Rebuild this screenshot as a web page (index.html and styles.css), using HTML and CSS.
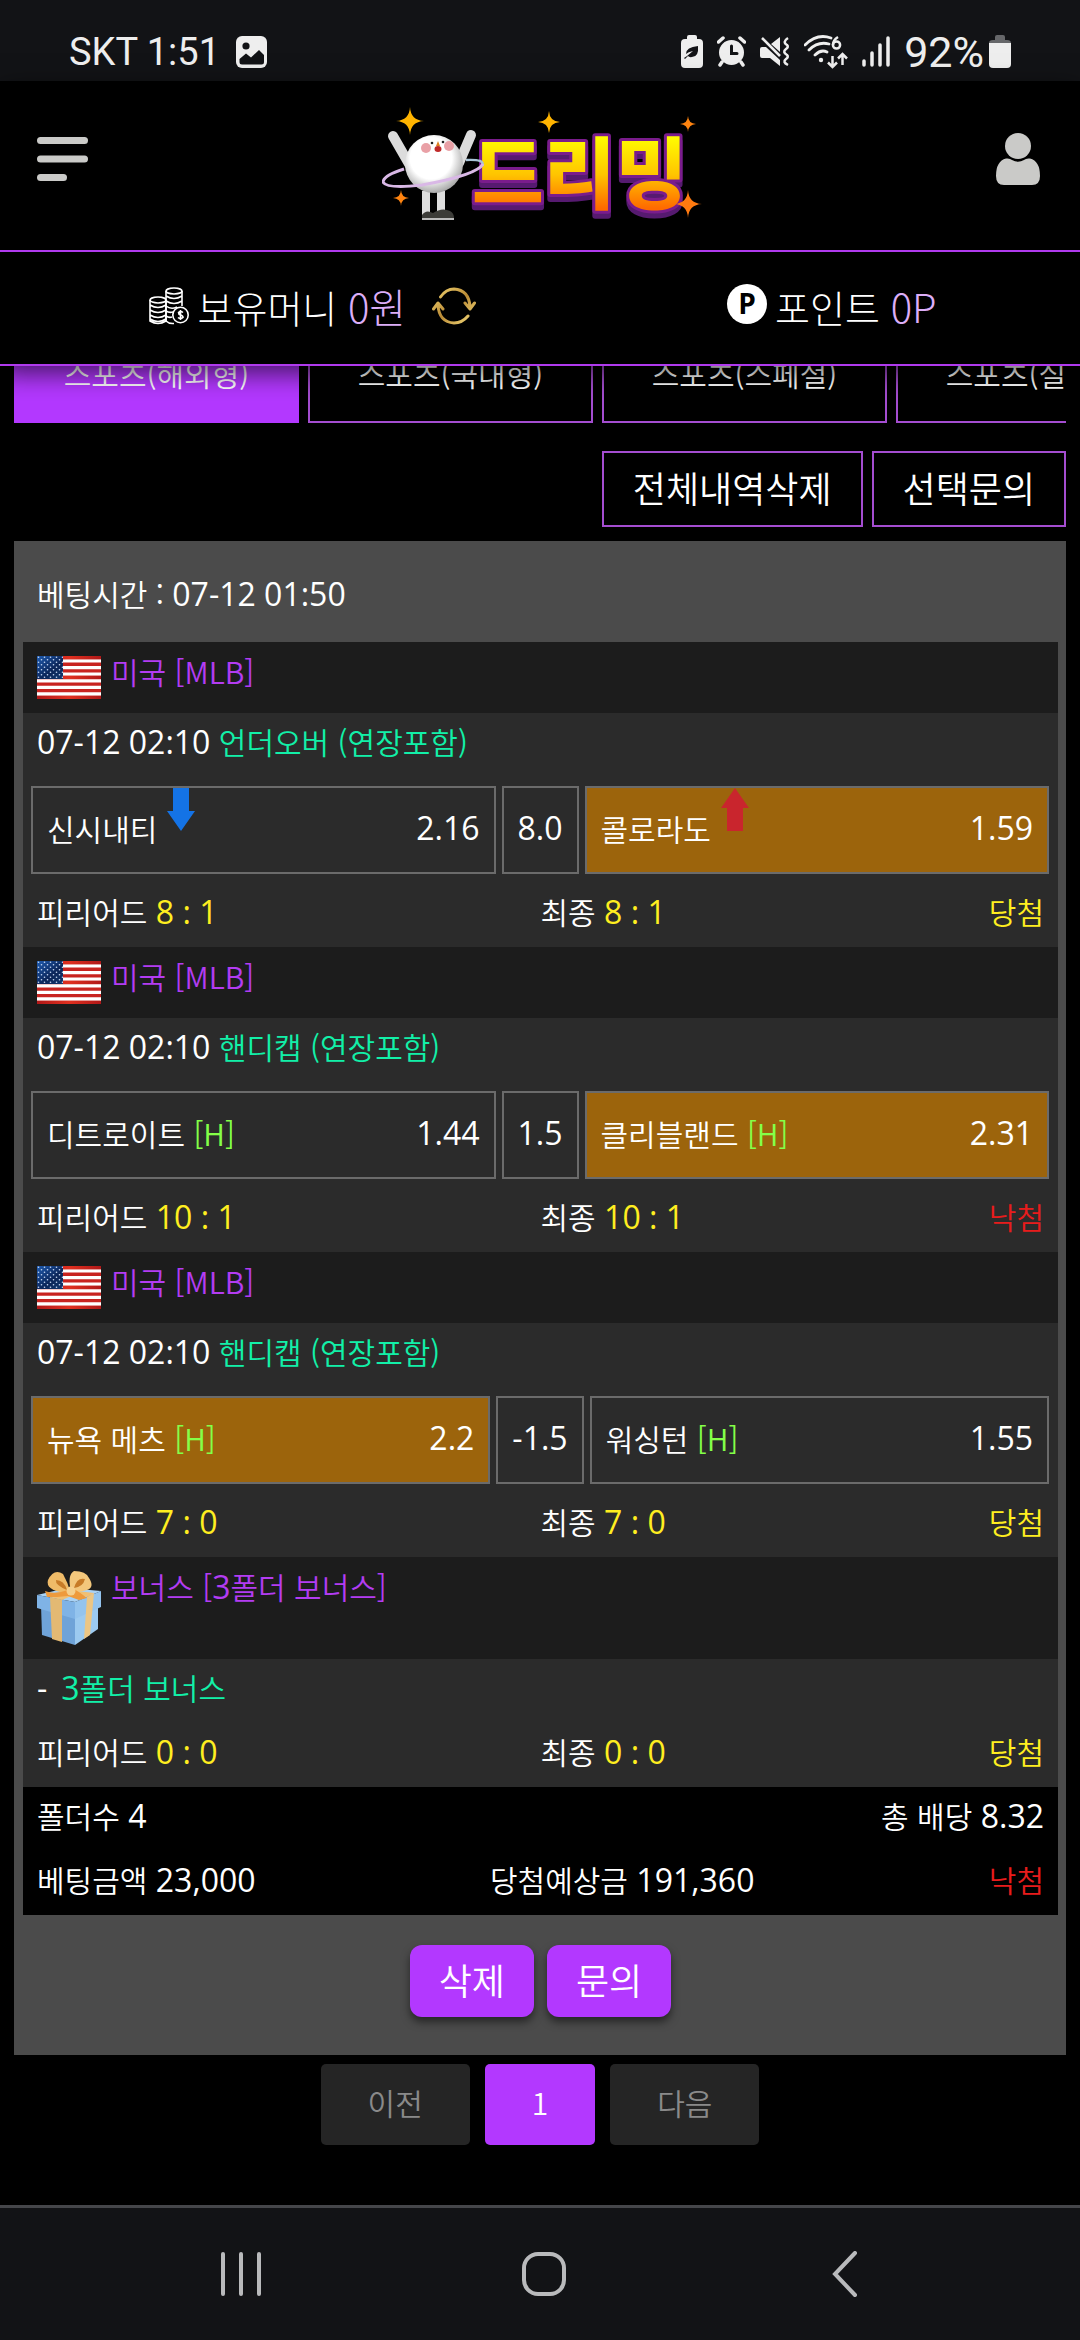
FILE: index.html
```html
<!DOCTYPE html>
<html lang="ko">
<head>
    <meta charset="UTF-8">
    <meta name="viewport" content="width=device-width, initial-scale=1.0">
    <title>드리밍 - 베팅내역</title>
    <link rel="stylesheet" href="styles.css">
</head>
<body>

    <!-- shared drawings -->
    <svg class="defs" aria-hidden="true">
        <defs>
            <linearGradient id="gloss" x1="0" y1="0" x2="1" y2="0">
                <stop offset="0" stop-color="#b01818"/>
                <stop offset=".5" stop-color="#e03020"/>
                <stop offset="1" stop-color="#b01818"/>
            </linearGradient>
            <linearGradient id="navy" x1="0" y1="0" x2="1" y2="1">
                <stop offset="0" stop-color="#1e5bb0"/>
                <stop offset=".6" stop-color="#0c2558"/>
                <stop offset="1" stop-color="#14386e"/>
            </linearGradient>
            <linearGradient id="gold" x1="0" y1="0" x2="0" y2="1">
                <stop offset=".2" stop-color="#ffff00"/>
                <stop offset=".55" stop-color="#ffc400"/>
                <stop offset=".85" stop-color="#ff6a00"/>
            </linearGradient>
            <linearGradient id="brass" x1="0" y1="0" x2="1" y2="1">
                <stop offset="0" stop-color="#f3d673"/>
                <stop offset=".5" stop-color="#b98a35"/>
                <stop offset="1" stop-color="#f6dc7c"/>
            </linearGradient>
            <radialGradient id="ball" cx=".45" cy=".4" r=".6">
                <stop offset=".6" stop-color="#ffffff"/>
                <stop offset="1" stop-color="#a9a9a9"/>
            </radialGradient>
            <pattern id="stars" width="6" height="5" patternUnits="userSpaceOnUse">
                <circle cx="1.5" cy="1.3" r=".8" fill="#c8d8f4"/>
                <circle cx="4.5" cy="3.8" r=".8" fill="#c8d8f4"/>
            </pattern>
            <symbol id="flag" viewBox="0 0 64 43">
                <rect width="64" height="43" fill="#fff"/>
                <path d="M0 1.65H64M0 8.27H64M0 14.88H64M0 21.5H64M0 28.1H64M0 34.7H64M0 41.35H64" stroke="#c82420" stroke-width="3.3"/>
                <path d="M0 0H64V3.3H0zM0 19.8H64V23.1H0zM0 39.7H64V43H0z" fill="url(#gloss)"/>
                <rect width="26" height="23" fill="url(#navy)"/>
                <rect width="26" height="23" fill="url(#stars)"/>
            </symbol>
            <symbol id="spark" viewBox="-10 -10 20 20">
                <path d="M0-10Q.5-.5 10 0Q.5.5 0 10Q-.5.5-10 0Q-.5-.5 0-10z"/>
                <circle r="2"/>
            </symbol>
        </defs>
    </svg>

    <!-- phone status bar -->
    <div class="status">
        <div class="status-left">
            <span>SKT 1:51</span>
            <svg width="31" height="32" viewBox="0 0 31 32">
                <rect width="31" height="32" rx="6" fill="#eee"/>
                <circle cx="10" cy="10" r="3.6" fill="#121316"/>
                <path d="M3.5 23L10 17.5L15 21.5L23 14L28 19V26Q28 28.5 25.5 28.5H6Q3.5 28.5 3.5 26z" fill="#121316"/>
            </svg>
        </div>
        <div class="status-right">
            <svg width="22" height="33" viewBox="0 0 22 33">
                <path d="M6 4V2Q6 0 8 0H14Q16 0 16 2V4H18Q22 4 22 8V29Q22 33 18 33H4Q0 33 0 29V8Q0 4 4 4z" fill="#eee"/>
                <path d="M5 19Q5 12 17 11Q18 22 11 22Q8 22.5 7 21L4 24L3 23L6 21L12 16Q7 17 5 19z" fill="#121316"/>
            </svg>
            <svg width="29" height="31" viewBox="0 0 29 31">
                <circle cx="14.5" cy="16.5" r="12.5" fill="#eee"/>
                <path d="M1.5 6L6 2M27.5 6L23 2M5 26L3 29M24 26L26 29" stroke="#eee" stroke-width="3.5" stroke-linecap="round"/>
                <path d="M14.5 10V17.5H20" fill="none" stroke="#121316" stroke-width="3" stroke-linecap="round"/>
            </svg>
            <svg width="30" height="31" viewBox="0 0 30 31">
                <path d="M11 8L20 1V16zM2 11H6L20 24V30L10 22H2Q0 22 0 20V13Q0 11 2 11z" fill="#eee"/>
                <path d="M2 2L20 20" stroke="#eee" stroke-width="2.5"/>
                <path d="M28 2Q22 6 27 9Q29 11 26 13Q22 16 27 19Q29 21 26 23Q22 26 28 29" fill="none" stroke="#eee" stroke-width="2.5"/>
            </svg>
            <svg width="44" height="34" viewBox="0 0 44 34">
                <path d="M1 10Q13-2 27 3M5 15Q14 6 25 9M11 20Q17 14 23 17" fill="none" stroke="#eee" stroke-width="2.8" stroke-linecap="round"/>
                <circle cx="17" cy="25" r="2.2" fill="#eee"/>
                <path d="M34 2Q29 5 29 10" fill="none" stroke="#eee" stroke-width="2.5"/>
                <circle cx="32.5" cy="10" r="3.6" fill="none" stroke="#eee" stroke-width="2.5"/>
                <path d="M28.5 21V32M24 27.5L28.5 32L33 27.5M38.5 30V19M34 23.5L38.5 19L43 23.5" fill="none" stroke="#eee" stroke-width="2.5"/>
            </svg>
            <svg width="28" height="31" viewBox="0 0 28 31">
                <path d="M2 25V29M10 17V29M18 9V29M26 2V29" stroke="#eee" stroke-width="3.5" stroke-linecap="round"/>
            </svg>
            <div class="battery">
                <span>92%</span>
                <svg width="22" height="33" viewBox="0 0 22 33">
                    <path d="M6 5V2Q6 0 8 0H14Q16 0 16 2V5H18Q22 5 22 8H0Q0 5 4 5z" fill="#66676a"/>
                    <path d="M0 8H22V29Q22 33 18 33H4Q0 33 0 29z" fill="#eee"/>
                </svg>
            </div>
        </div>
    </div>

    <header class="top">
        <div class="brand">
            <button type="button" class="icon-btn" aria-label="메뉴">
                <svg width="51" height="44" viewBox="0 0 51 44" fill="#cacac8">
                    <rect width="51" height="7" rx="3.5"/>
                    <rect y="18.5" width="51" height="7" rx="3.5"/>
                    <rect y="37" width="30" height="7" rx="3.5"/>
                </svg>
            </button>

            <a href="#" class="logo" aria-label="드리밍">
                <svg width="320" height="124" viewBox="0 -8 320 124">
                    <g fill="#ffb400">
                        <use href="#spark" x="14" y="0" width="28" height="32"/>
                        <use href="#spark" x="156" y="5" width="22" height="24"/>
                    </g>
                    <g fill="#ff8410">
                        <use href="#spark" x="11" y="84" width="16" height="18"/>
                        <use href="#spark" x="298" y="10" width="16" height="18"/>
                    </g>
                    <text x="90" y="98" class="logo-text">드리밍</text>
                    <use href="#spark" x="292" y="84" width="28" height="30" fill="#ff7a10"/>
                    <!-- mascot -->
                    <path d="M84 55Q104 54 100 61" fill="none" stroke="#a9c4d8" stroke-width="2.5"/>
                    <path d="M11 31L30 64M89 30L77 58" stroke="#dcdcdc" stroke-width="10" stroke-linecap="round"/>
                    <path d="M44 86V112M59 86V112" stroke="#dedede" stroke-width="8"/>
                    <circle cx="52" cy="59" r="29" fill="url(#ball)"/>
                    <circle cx="44" cy="43" r="5" fill="#e9a0a6"/>
                    <circle cx="67" cy="41" r="5" fill="#e9a0a6"/>
                    <circle cx="50" cy="38" r="1.3" fill="#222"/>
                    <circle cx="61" cy="37" r="1.3" fill="#222"/>
                    <path d="M56 36L58 41H54z" fill="#e08020"/>
                    <ellipse cx="56" cy="44" rx="3.5" ry="3" fill="#c02a2a"/>
                    <path d="M22 64Q2 70 1 77Q4 84 40 80Q95 70 101 59" fill="none" stroke="#d9b8e6" stroke-width="3"/>
                    <path d="M40 113V110Q44 104 51 108Q60 102 68 106Q72 108 72 113z" fill="#3c3c38"/>
                    <path d="M40 114H72" stroke="#bbb" stroke-width="2"/>
                </svg>
            </a>

            <button type="button" class="icon-btn" aria-label="내 정보">
                <svg width="44" height="52" viewBox="0 0 44 52" fill="#cacac8">
                    <circle cx="22" cy="13" r="13"/>
                    <path d="M10 25.5Q14 25 16 27Q22 30.5 28 27Q30 25 34 25.5Q44 28 44 43Q44 52 36 52H8Q0 52 0 43Q0 28 10 25.5z"/>
                </svg>
            </button>
        </div>

        <div class="wallet">
            <div class="wallet-item">
                <svg width="40" height="38" viewBox="0 0 40 38" fill="none" stroke="#fff" stroke-width="1.6">
                    <ellipse cx="9" cy="13" rx="8" ry="3"/>
                    <path d="M1 13V34Q9 39 17 34V13M1 18Q9 23 17 18M1 23Q9 28 17 23M1 28Q9 33 17 28M1 32Q9 37 17 32"/>
                    <ellipse cx="25" cy="4" rx="8" ry="3"/>
                    <path d="M17 4V34Q20 37 25 36.5M33 4V19M17 9Q25 14 33 9M17 14Q25 19 33 14M17 19Q22 23 28 20M17 24Q20 26 24 25M17 29Q20 31 23 30"/>
                    <circle cx="31.5" cy="28" r="7.7" fill="#000"/>
                    <path d="M34 25.5Q31.5 23.5 29.5 25.5Q29.5 27.5 31.5 28Q34 28.5 34 30.5Q31.5 32.5 29 30.5M31.5 23V33"/>
                </svg>
                <span>보유머니 <span class="amount">0원</span></span>
                <button type="button" class="icon-btn refresh" aria-label="새로고침">
                    <svg width="44" height="38" viewBox="0 0 44 38" fill="none" stroke="url(#brass)" stroke-width="3" stroke-linecap="round" stroke-linejoin="round">
                        <path d="M8.5 10Q14 2 22 2Q37 3 38 20M33 16L38 22L42.5 16M36 29Q30 36 22 36Q7 35 6 18M1.5 22L6 16L11 22"/>
                    </svg>
                </button>
            </div>
            <div class="wallet-item">
                <svg class="point-icon" width="40" height="40" viewBox="0 0 40 40">
                    <circle cx="20" cy="20" r="20" fill="#fff"/>
                    <text x="20" y="30" class="point-letter">P</text>
                </svg>
                <span>포인트 <span class="amount">0P</span></span>
            </div>
        </div>
    </header>

    <main>
        <nav class="tabs">
            <button type="button" class="tab active">스포츠(해외형)</button>
            <button type="button" class="tab">스포츠(국내형)</button>
            <button type="button" class="tab">스포츠(스페셜)</button>
            <button type="button" class="tab">스포츠(실시간)</button>
        </nav>

        <div class="tools">
            <button type="button" class="tool">전체내역삭제</button>
            <button type="button" class="tool">선택문의</button>
        </div>

        <section class="slip">
            <div class="slip-time">베팅시간 : <span class="num">07-12 01:50</span></div>

            <div class="slip-body">
                <!-- game 1 -->
                <div class="league">
                    <svg width="64" height="43"><use href="#flag"/></svg>
                    <span>미국 [MLB]</span>
                </div>
                <div class="game">
                    <div class="kind"><span class="num">07-12 02:10</span> <span class="type">언더오버 (연장포함)</span></div>
                    <div class="odds">
                        <div class="pick">
                            <span>신시내티</span>
                            <svg class="arrow" width="28" height="43" viewBox="0 0 28 43"><path d="M6 0H22V23H28L14 43L0 23H6z" fill="#1473e6"/></svg>
                            <span class="num rate">2.16</span>
                        </div>
                        <div class="line num">8.0</div>
                        <div class="pick chosen">
                            <span>콜로라도</span>
                            <svg class="arrow" width="28" height="43" viewBox="0 0 28 43"><path d="M6 43H22V20H28L14 0L0 20H6z" fill="#c9252d"/></svg>
                            <span class="num rate">1.59</span>
                        </div>
                    </div>
                    <div class="score">
                        <span>피리어드 <span class="num pt">8 : 1</span></span>
                        <span>최종 <span class="num pt">8 : 1</span></span>
                        <span class="win">당첨</span>
                    </div>
                </div>

                <!-- game 2 -->
                <div class="league">
                    <svg width="64" height="43"><use href="#flag"/></svg>
                    <span>미국 [MLB]</span>
                </div>
                <div class="game">
                    <div class="kind"><span class="num">07-12 02:10</span> <span class="type">핸디캡 (연장포함)</span></div>
                    <div class="odds">
                        <div class="pick">
                            <span>디트로이트 <span class="handi">[H]</span></span>
                            <span class="num rate">1.44</span>
                        </div>
                        <div class="line num">1.5</div>
                        <div class="pick chosen">
                            <span>클리블랜드 <span class="handi">[H]</span></span>
                            <span class="num rate">2.31</span>
                        </div>
                    </div>
                    <div class="score">
                        <span>피리어드 <span class="num pt">10 : 1</span></span>
                        <span>최종 <span class="num pt">10 : 1</span></span>
                        <span class="lose">낙첨</span>
                    </div>
                </div>

                <!-- game 3 -->
                <div class="league">
                    <svg width="64" height="43"><use href="#flag"/></svg>
                    <span>미국 [MLB]</span>
                </div>
                <div class="game">
                    <div class="kind"><span class="num">07-12 02:10</span> <span class="type">핸디캡 (연장포함)</span></div>
                    <div class="odds">
                        <div class="pick chosen">
                            <span>뉴욕 메츠 <span class="handi">[H]</span></span>
                            <span class="num rate">2.2</span>
                        </div>
                        <div class="line num">-1.5</div>
                        <div class="pick">
                            <span>워싱턴 <span class="handi">[H]</span></span>
                            <span class="num rate">1.55</span>
                        </div>
                    </div>
                    <div class="score">
                        <span>피리어드 <span class="num pt">7 : 0</span></span>
                        <span>최종 <span class="num pt">7 : 0</span></span>
                        <span class="win">당첨</span>
                    </div>
                </div>

                <!-- folder bonus -->
                <div class="league">
                    <svg width="64" height="74" viewBox="0 0 64 74">
                        <path d="M4 34L38 46V74L5 64z" fill="#6fa3d8"/>
                        <path d="M38 46L61 36V58L38 74z" fill="#9ccaf0"/>
                        <path d="M0 24L30 17L64 20L38 31z" fill="#a9d2f5"/>
                        <path d="M0 24L38 31V48L0 37z" fill="#7fb3e6"/>
                        <path d="M38 31L64 20V36L38 48z" fill="#94c4ee"/>
                        <path d="M13 26L25 29V71L15 68z" fill="#e3b973"/>
                        <path d="M50 26L57 22L53 64L47 68z" fill="#ecc684"/>
                        <path d="M13 26L34 20L41 22L25 29zM34 22L40 20L57 22L50 26z" fill="#f0bf73"/>
                        <path d="M31 22Q8 20 11 9Q17-3 26 3Q31 12 33 20z" fill="#efbb68"/>
                        <path d="M34 20Q30 4 37 0Q49 0 52 7Q58 16 50 19Q42 22 34 20z" fill="#f3c77c"/>
                        <path d="M30 19Q18 14 19 9Q27 9 30 19zM37 17Q40 6 48 8Q46 16 37 17z" fill="#c77b27"/>
                        <path d="M31 19Q17 24 8 20L10 26L20 26L31 25L42 29L50 27Q44 22 37 18z" fill="#ee9a3c"/>
                        <circle cx="34" cy="20" r="4.5" fill="#f5cf8c"/>
                    </svg>
                    <span>보너스 [<span class="num">3</span>폴더 보너스]</span>
                </div>
                <div class="game">
                    <div class="kind dash"><span class="num">-</span><span class="type"><span class="num">3</span>폴더 보너스</span></div>
                    <div class="score">
                        <span>피리어드 <span class="num pt">0 : 0</span></span>
                        <span>최종 <span class="num pt">0 : 0</span></span>
                        <span class="win">당첨</span>
                    </div>
                </div>

                <!-- totals -->
                <div class="total">
                    <div class="total-row">
                        <span>폴더수 <span class="num">4</span></span>
                        <span>총 배당 <span class="num">8.32</span></span>
                    </div>
                    <div class="total-row">
                        <span>베팅금액 <span class="num">23,000</span></span>
                        <span>당첨예상금 <span class="num">191,360</span></span>
                        <span class="lose">낙첨</span>
                    </div>
                </div>
            </div>

            <div class="slip-buttons">
                <button type="button" class="action">삭제</button>
                <button type="button" class="action">문의</button>
            </div>
        </section>

        <div class="pages">
            <button type="button" class="page" disabled>이전</button>
            <button type="button" class="page current">1</button>
            <button type="button" class="page" disabled>다음</button>
        </div>
    </main>

    <!-- phone navigation bar -->
    <footer class="phone-nav">
        <button type="button" class="nav-btn" aria-label="최근 앱">
            <svg width="42" height="44" viewBox="0 0 42 44"><path d="M2 2V42M20 2V42M38 2V42" stroke="#b9babc" stroke-width="4" stroke-linecap="round"/></svg>
        </button>
        <button type="button" class="nav-btn" aria-label="홈">
            <svg width="44" height="44" viewBox="0 0 44 44"><rect x="2" y="2" width="40" height="40" rx="14" fill="none" stroke="#b9babc" stroke-width="4"/></svg>
        </button>
        <button type="button" class="nav-btn" aria-label="뒤로">
            <svg width="26" height="46" viewBox="0 0 26 46"><path d="M23 2L3 23L23 44" fill="none" stroke="#b9babc" stroke-width="4" stroke-linecap="round"/></svg>
        </button>
    </footer>

</body>
</html>
```
FILE: styles.css
```css
* {
    box-sizing: border-box;
}

body {
    display: flex;
    flex-direction: column;
    min-height: 100vh;
    margin: 0;
    background: #000;
    color: #fff;
    font-family: "Noto Sans CJK KR", sans-serif;
    font-size: 30px;
    font-weight: 350;
    line-height: 40px;
}

button {
    padding: 0;
    border: 0;
    background: none;
    color: inherit;
    font: inherit;
}

svg {
    display: block;
    flex: none;
}

.defs {
    position: absolute;
    width: 0;
    height: 0;
}

.num {
    font-family: "Open Sans", "Noto Sans", sans-serif;
    font-size: 32px;
    font-weight: 400;
    line-height: 20px;
}

/* status bar */
.status {
    display: flex;
    justify-content: space-between;
    align-items: center;
    height: 81px;
    padding: 22px 69px 0;
    background: #121316;
    color: #eee;
    font-family: Roboto, sans-serif;
    font-size: 38px;
    font-weight: 400;
}

.status-left {
    display: flex;
    align-items: center;
    gap: 16px;
}

.status-right {
    display: flex;
    align-items: center;
    gap: 14px;
}

.battery {
    display: flex;
    align-items: center;
    gap: 5px;
    font-size: 43px;
}

/* header */
.top {
    position: relative;
    z-index: 2;
    background: #000;
    border-bottom: 2px solid #b03aee;
    box-shadow: 0 8px 24px rgba(0, 0, 0, 0.6);
}

.brand {
    display: flex;
    justify-content: space-between;
    align-items: center;
    height: 171px;
    padding: 0 40px 14px 37px;
    border-bottom: 2px solid #b03aee;
}

.logo-text {
    font-size: 78px;
    font-weight: 900;
    fill: url(#gold);
    stroke: #7a1c8c;
    stroke-width: 6px;
    stroke-linejoin: round;
    paint-order: stroke;
    filter: drop-shadow(0 5px 0 #561a70);
}

.wallet {
    display: flex;
    justify-content: space-around;
    align-items: center;
    height: 112px;
    padding: 0 18px 4px 24px;
    font-size: 38px;
    font-weight: 300;
}

.wallet-item {
    display: flex;
    align-items: center;
    gap: 8px;
}

.amount {
    color: #dcaef8;
    font-size: 40px;
}

.refresh {
    margin-left: 18px;
}

.point-icon {
    margin-bottom: 4px;
}

.point-letter {
    font-family: "Open Sans", sans-serif;
    font-size: 28px;
    font-weight: 700;
    text-anchor: middle;
}

/* tabs */
main {
    padding: 0 14px;
}

.tabs {
    display: flex;
    gap: 9px;
    margin-top: -37px;
    overflow: hidden;
}

.tab {
    flex: none;
    width: 285px;
    height: 94px;
    padding-bottom: 6px;
    border: 2px solid #a44dd0;
}

.tab.active {
    background: #b338ff;
    border-color: #b338ff;
}

.tools {
    display: flex;
    justify-content: flex-end;
    gap: 9px;
    padding: 28px 0 14px;
}

.tool {
    height: 76px;
    padding: 0 29px 4px;
    border: 2px solid #a44dd0;
    font-size: 36px;
}

/* bet slip */
.slip {
    padding: 0 8px 0 9px;
    background: #4b4b4b;
}

.slip-time {
    padding: 32px 14px 29px;
}

.slip-body {
    background: #2b2b2b;
}

.league {
    display: flex;
    align-items: flex-start;
    gap: 10px;
    padding: 14px;
    background: #1c1c1c;
    color: #b33cf2;
    line-height: 31px;
}

.kind {
    padding: 0 14px 4px;
    line-height: 56px;
}

.dash {
    display: flex;
    align-items: baseline;
    gap: 14px;
}

.type {
    color: #12f0a8;
}

.odds {
    display: flex;
    gap: 6px;
    padding: 13px 9px 5px 8px;
}

.pick,
.line {
    display: flex;
    align-items: center;
    height: 88px;
    padding: 0 14px 4px;
    border: 2px solid #6b6b6b;
}

.pick {
    flex: 1;
}

.chosen {
    background: #9c640c;
}

.arrow {
    align-self: flex-start;
    margin-left: 10px;
}

.rate {
    margin-left: auto;
}

.handi {
    color: #84ff48;
}

.score {
    display: flex;
    justify-content: space-between;
    padding: 0 14px 4px;
    line-height: 64px;
}

.pt,
.win {
    color: #ffee20;
}

.lose {
    color: #e81c1c;
}

.total {
    background: #000;
}

.total-row {
    display: flex;
    justify-content: space-between;
    padding: 0 14px 8px;
    line-height: 56px;
}

.slip-buttons {
    display: flex;
    justify-content: center;
    gap: 13px;
    padding: 30px 0 38px;
}

.action {
    height: 72px;
    padding: 0 29px 4px;
    border-radius: 12px;
    background: #b338ff;
    box-shadow: 0 5px 8px rgba(0, 0, 0, 0.5);
    font-size: 36px;
}

/* pagination */
.pages {
    display: flex;
    justify-content: center;
    gap: 15px;
    padding: 9px 0;
}

.page {
    height: 81px;
    padding: 0 47px 6px;
    border-radius: 5px;
    background: #252525;
}

.page:disabled {
    color: #8a8a8a;
}

.current {
    background: #b338ff;
}

.phone-nav {
    display: flex;
    align-items: center;
    height: 135px;
    margin-top: auto;
    padding: 0 84px 0 91px;
    background: #121316;
    border-top: 3px solid #45464a;
}

.nav-btn {
    display: flex;
    flex: 1;
    justify-content: center;
}
```
